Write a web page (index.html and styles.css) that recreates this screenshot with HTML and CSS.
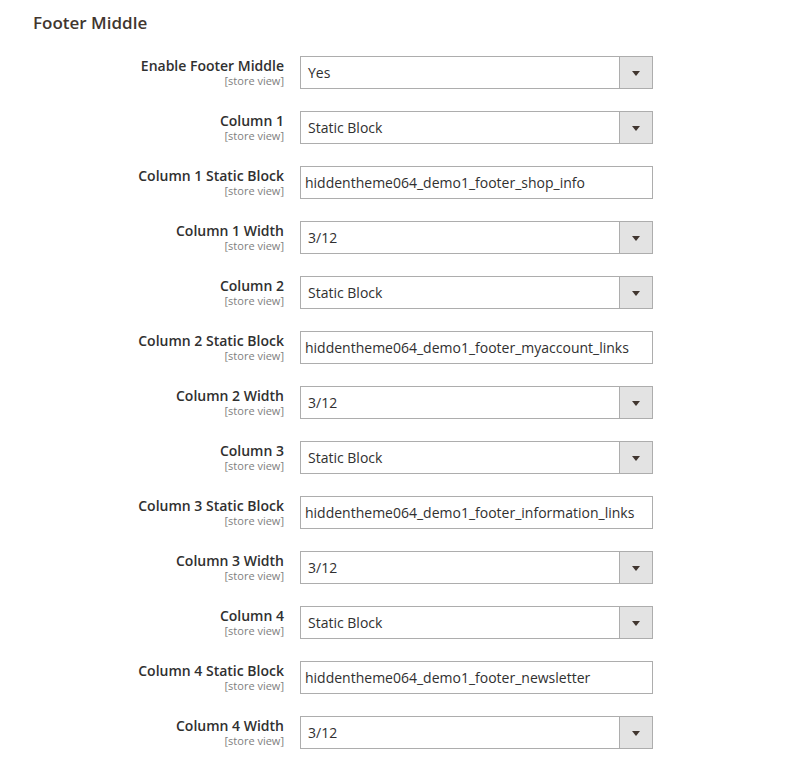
FILE: index.html
```html
<!DOCTYPE html>
<html>
<head>
<meta charset="utf-8">
<link rel="stylesheet" href="styles.css">
</head>
<body>
<div class="section">
  <h2 class="title">Footer Middle</h2>
  <div class="fields">
    <div class="row"><div class="label"><span class="name">Enable Footer Middle</span><span class="scope">[store view]</span></div><div class="select"><span class="value">Yes</span><span class="btn"><span class="arrow"></span></span></div></div>
    <div class="row"><div class="label"><span class="name">Column 1</span><span class="scope">[store view]</span></div><div class="select"><span class="value">Static Block</span><span class="btn"><span class="arrow"></span></span></div></div>
    <div class="row"><div class="label"><span class="name">Column 1 Static Block</span><span class="scope">[store view]</span></div><div class="input">hiddentheme064_demo1_footer_shop_info</div></div>
    <div class="row"><div class="label"><span class="name">Column 1 Width</span><span class="scope">[store view]</span></div><div class="select"><span class="value">3/12</span><span class="btn"><span class="arrow"></span></span></div></div>
    <div class="row"><div class="label"><span class="name">Column 2</span><span class="scope">[store view]</span></div><div class="select"><span class="value">Static Block</span><span class="btn"><span class="arrow"></span></span></div></div>
    <div class="row"><div class="label"><span class="name">Column 2 Static Block</span><span class="scope">[store view]</span></div><div class="input">hiddentheme064_demo1_footer_myaccount_links</div></div>
    <div class="row"><div class="label"><span class="name">Column 2 Width</span><span class="scope">[store view]</span></div><div class="select"><span class="value">3/12</span><span class="btn"><span class="arrow"></span></span></div></div>
    <div class="row"><div class="label"><span class="name">Column 3</span><span class="scope">[store view]</span></div><div class="select"><span class="value">Static Block</span><span class="btn"><span class="arrow"></span></span></div></div>
    <div class="row"><div class="label"><span class="name">Column 3 Static Block</span><span class="scope">[store view]</span></div><div class="input">hiddentheme064_demo1_footer_information_links</div></div>
    <div class="row"><div class="label"><span class="name">Column 3 Width</span><span class="scope">[store view]</span></div><div class="select"><span class="value">3/12</span><span class="btn"><span class="arrow"></span></span></div></div>
    <div class="row"><div class="label"><span class="name">Column 4</span><span class="scope">[store view]</span></div><div class="select"><span class="value">Static Block</span><span class="btn"><span class="arrow"></span></span></div></div>
    <div class="row"><div class="label"><span class="name">Column 4 Static Block</span><span class="scope">[store view]</span></div><div class="input">hiddentheme064_demo1_footer_newsletter</div></div>
    <div class="row"><div class="label"><span class="name">Column 4 Width</span><span class="scope">[store view]</span></div><div class="select"><span class="value">3/12</span><span class="btn"><span class="arrow"></span></span></div></div>
  </div>
</div>
</body>
</html>
```
FILE: styles.css
```css
html, body {
  margin: 0;
  padding: 0;
  background: #ffffff;
}
body {
  font-family: "Open Sans", "Liberation Sans", sans-serif;
  color: #303030;
}
.section {
  padding: 12px 0 0 33px;
}
.title {
  margin: 0;
  font-size: 17px;
  line-height: 22px;
  font-weight: 600;
  color: #41362f;
}
.fields {
  margin-top: 22px;
  display: flex;
  flex-direction: column;
  gap: 22px;
}
.row {
  display: grid;
  grid-template-columns: 251px 353px;
  column-gap: 16px;
  align-items: start;
}
.label {
  display: flex;
  flex-direction: column;
  align-items: flex-end;
  text-align: right;
}
.name {
  font-size: 14px;
  font-weight: 600;
  line-height: 19px;
  color: #303030;
}
.scope {
  font-size: 11px;
  line-height: 12px;
  color: #808080;
}
.select, .input {
  box-sizing: border-box;
  height: 33px;
  border: 1px solid #adadad;
  background: #ffffff;
  font-size: 14px;
  color: #303030;
  display: flex;
  align-items: center;
}
.select .value {
  flex: 1;
  padding-left: 7px;
}
.input {
  padding-left: 4px;
}
.btn {
  width: 33px;
  height: 100%;
  box-sizing: border-box;
  border-left: 1px solid #adadad;
  background: #e3e3e3;
  display: flex;
  align-items: center;
  justify-content: center;
}
.arrow {
  width: 0;
  height: 0;
  border-left: 4px solid transparent;
  border-right: 4px solid transparent;
  border-top: 5px solid #41362f;
  margin-top: 1px;
}
```
